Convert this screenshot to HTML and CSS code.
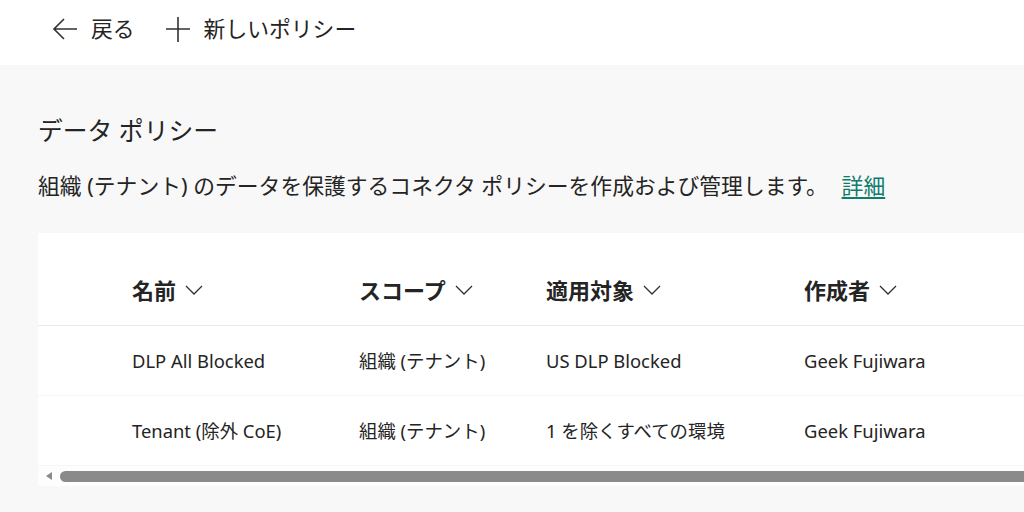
FILE: index.html
```html
<!DOCTYPE html>
<html lang="ja">
<head>
<meta charset="utf-8">
<link rel="stylesheet" href="styles.css">
</head>
<body>
<header class="cmdbar">
  <button class="cmd">
    <svg class="ico" width="26" height="26" viewBox="0 0 26 26"><path d="M25 13H2M12 3L2 13l10 10" fill="none" stroke="#323130" stroke-width="1.6"/></svg>
    <span>戻る</span>
  </button>
  <button class="cmd">
    <svg class="ico" width="26" height="26" viewBox="0 0 26 26"><path d="M13 1v25M1 13h24" fill="none" stroke="#323130" stroke-width="1.6"/></svg>
    <span>新しいポリシー</span>
  </button>
</header>
<main class="content">
  <h1 class="title">データ ポリシー</h1>
  <p class="desc">組織 (テナント) のデータを保護するコネクタ ポリシーを作成および管理します。 <a class="link" href="#">詳細</a></p>
  <section class="card">
    <div class="row head">
      <div class="lead"></div>
      <div class="cell">名前<svg class="chev" viewBox="0 0 18 10"><path d="M1 1l8 8 8-8" fill="none" stroke="#323130" stroke-width="1.3"/></svg></div>
      <div class="cell">スコープ<svg class="chev" viewBox="0 0 18 10"><path d="M1 1l8 8 8-8" fill="none" stroke="#323130" stroke-width="1.3"/></svg></div>
      <div class="cell">適用対象<svg class="chev" viewBox="0 0 18 10"><path d="M1 1l8 8 8-8" fill="none" stroke="#323130" stroke-width="1.3"/></svg></div>
      <div class="cell">作成者<svg class="chev" viewBox="0 0 18 10"><path d="M1 1l8 8 8-8" fill="none" stroke="#323130" stroke-width="1.3"/></svg></div>
    </div>
    <div class="row data">
      <div class="lead"></div>
      <div class="cell">DLP All Blocked</div>
      <div class="cell">組織 (テナント)</div>
      <div class="cell">US DLP Blocked</div>
      <div class="cell">Geek Fujiwara</div>
    </div>
    <div class="row data">
      <div class="lead"></div>
      <div class="cell">Tenant (除外 CoE)</div>
      <div class="cell">組織 (テナント)</div>
      <div class="cell">1 を除くすべての環境</div>
      <div class="cell">Geek Fujiwara</div>
    </div>
    <div class="scrollbar">
      <span class="arrow"></span>
      <span class="thumb"></span>
    </div>
  </section>
</main>
</body>
</html>
```

FILE: styles.css
```css
* { box-sizing: border-box; }
html, body { margin: 0; padding: 0; }
body {
  width: 1024px;
  height: 512px;
  overflow: hidden;
  background: #f8f8f8;
  font-family: "Noto Sans", "Noto Sans CJK JP", sans-serif;
  color: #242424;
}
.cmdbar {
  height: 65px;
  background: #ffffff;
  display: flex;
  align-items: flex-start;
  padding: 16px 0 0 52px;
  gap: 30px;
}
.cmd {
  display: flex;
  align-items: center;
  gap: 13px;
  background: none;
  border: 0;
  padding: 0;
  font-family: inherit;
  font-size: 21.8px;
  line-height: 26px;
  color: #242424;
}
.ico { display: block; }
.content {
  padding: 0 0 0 38px;
}
.title {
  margin: 0;
  padding-top: 50px;
  font-size: 24.8px;
  font-weight: 400;
  line-height: 30px;
  height: 80px;
}
.desc {
  margin: 26px 0 0;
  font-size: 21.8px;
  line-height: 30px;
  color: #242424;
}
.link {
  color: #0f7c6c;
  text-decoration: underline;
  text-underline-offset: 3px;
  margin-left: 8px;
}
.card {
  margin-top: 32px;
  background: #ffffff;
}
.row {
  display: grid;
  grid-template-columns: 94px 227px 187px 258px 1fr;
}
.row.head {
  height: 93px;
  align-items: end;
  padding-bottom: 20px;
  border-bottom: 1px solid #ebebeb;
  font-weight: 700;
  font-size: 22px;
  line-height: 30px;
}
.row.head .cell {
  display: flex;
  align-items: center;
  gap: 9px;
}
.chev { width: 18px; height: 10px; display: block; }
.row.data {
  height: 70px;
  align-items: center;
  font-size: 18.4px;
  line-height: 24px;
  border-bottom: 1px solid #f5f5f5;
}
.scrollbar {
  height: 20px;
  display: flex;
  align-items: center;
  padding-left: 8px;
  gap: 8px;
  background: #fdfdfd;
}
.arrow {
  width: 0;
  height: 0;
  border-top: 4px solid transparent;
  border-bottom: 4px solid transparent;
  border-right: 6px solid #8a8a8a;
}
.thumb {
  flex: 1;
  height: 11px;
  border-radius: 6px 0 0 6px;
  background: #8a8a8a;
}
```
